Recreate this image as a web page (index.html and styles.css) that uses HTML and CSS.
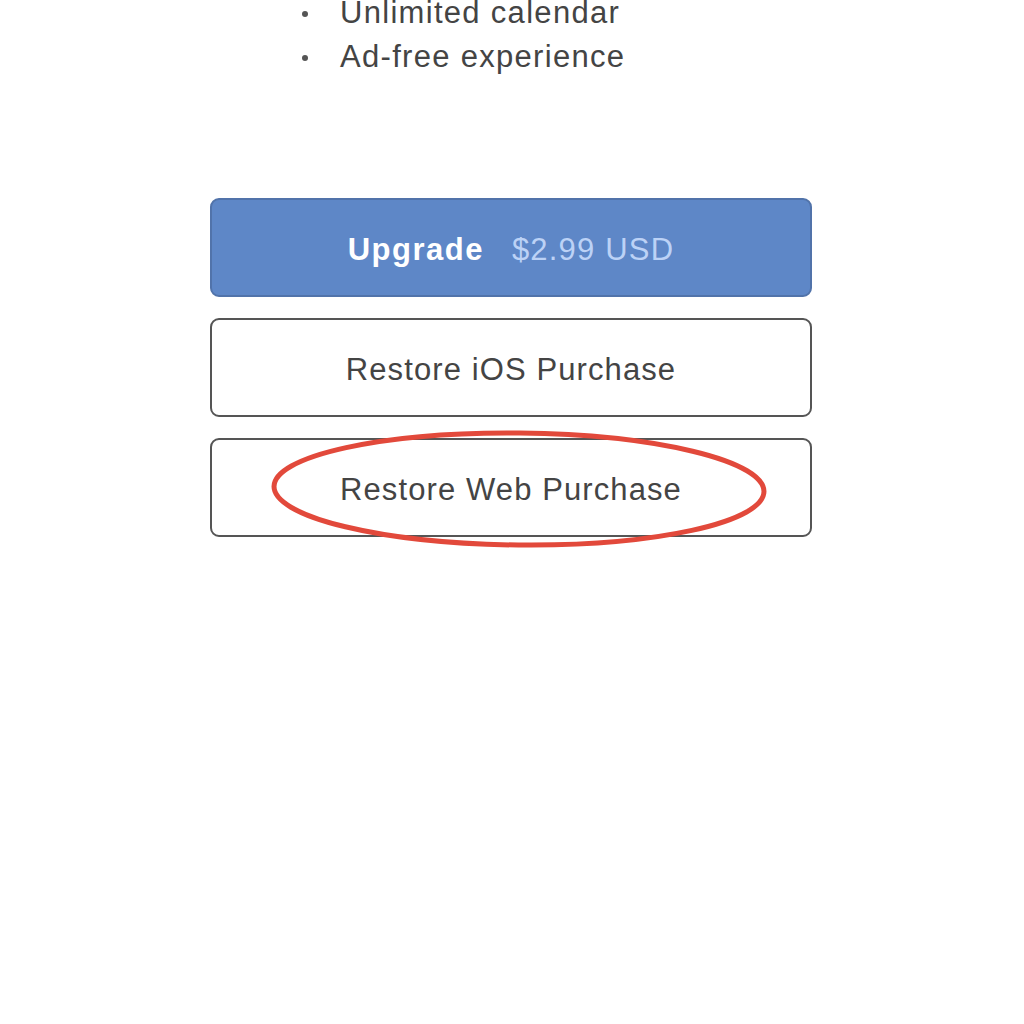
FILE: index.html
```html
<!DOCTYPE html>
<html>
<head>
<meta charset="utf-8">
<link rel="stylesheet" href="styles.css">
</head>
<body>
<div class="page">
  <ul class="features">
    <li>Unlimited calendar</li>
    <li>Ad-free experience</li>
  </ul>
  <div class="actions">
    <button class="btn btn-primary"><span class="label">Upgrade</span><span class="price">$2.99 USD</span></button>
    <button class="btn">Restore iOS Purchase</button>
    <button class="btn">Restore Web Purchase</button>
  </div>
  <svg class="annotation" width="1024" height="1024" viewBox="0 0 1024 1024">
    <ellipse cx="519" cy="489" rx="245" ry="56" fill="none" stroke="#e2493b" stroke-width="5" transform="rotate(0.6 519 489)"/>
  </svg>
</div>
</body>
</html>
```
FILE: styles.css
```css
html, body {
  margin: 0;
  padding: 0;
  background: #ffffff;
}
.page {
  position: relative;
  width: 1024px;
  height: 1024px;
  overflow: hidden;
  font-family: "Liberation Sans", Arial, sans-serif;
  color: #444444;
}
.features {
  list-style: none;
  margin: -9px 0 0 0;
  padding: 0 0 0 340px;
  font-size: 31px;
  line-height: 44px;
  letter-spacing: 1.3px;
}
.features li {
  position: relative;
}
.features li::before {
  content: "";
  position: absolute;
  left: -38px;
  top: 20px;
  width: 6px;
  height: 6px;
  border-radius: 50%;
  background: #555555;
}
.actions {
  display: flex;
  flex-direction: column;
  gap: 21px;
  margin: 119px 0 0 210px;
  width: 602px;
}
.btn {
  box-sizing: border-box;
  height: 99px;
  width: 602px;
  border: 2px solid #555555;
  border-radius: 9px;
  background: #ffffff;
  font-family: "Liberation Sans", Arial, sans-serif;
  font-size: 31px;
  letter-spacing: 1.1px;
  color: #444444;
  display: flex;
  align-items: center;
  justify-content: center;
  padding: 4px 0 0 0;
}
.btn-primary {
  background: #5e87c7;
  border-color: #5173aa;
  gap: 28px;
}
.btn-primary .label {
  color: #ffffff;
  font-weight: bold;
  letter-spacing: 1.5px;
}
.btn-primary .price {
  color: #bcd2f6;
  letter-spacing: 1.2px;
}
.annotation {
  position: absolute;
  left: 0;
  top: 0;
  pointer-events: none;
}
```
